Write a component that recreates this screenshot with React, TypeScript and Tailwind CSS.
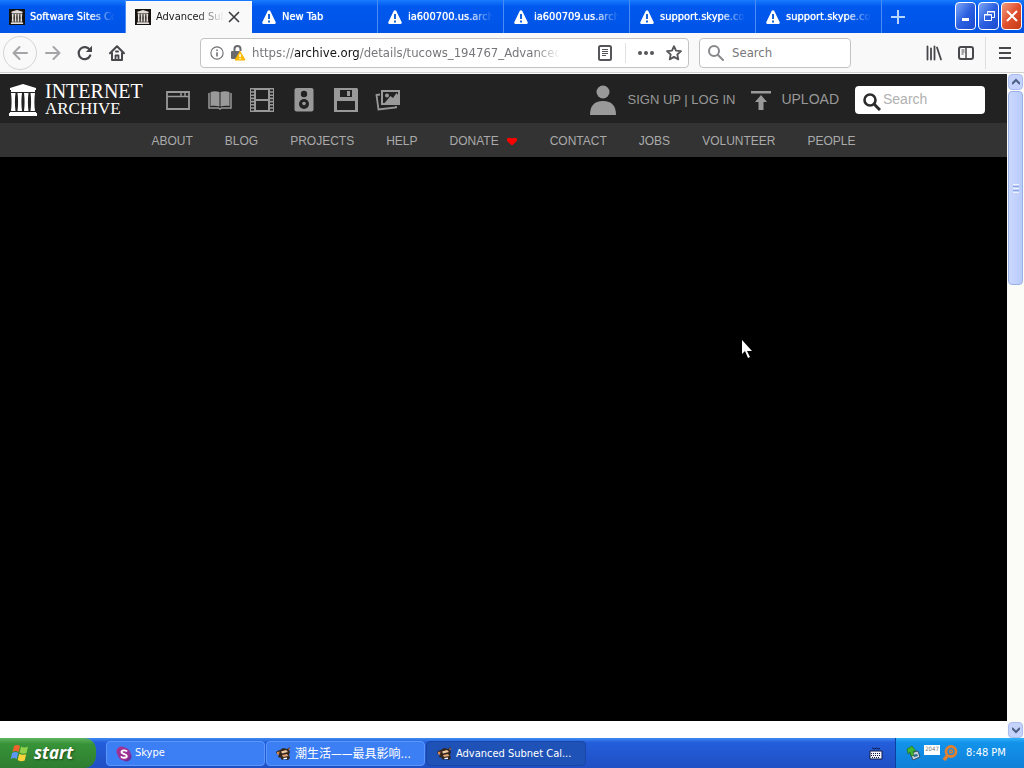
import React from "react";

const uiFont = "font-['DejaVu_Sans_Condensed','Noto_Sans_CJK_SC',sans-serif]";

function TempleIcon({ className, bars = "#fff" }: { className: string; bars?: string }) {
  return (
    <svg className={className} viewBox="0 0 28 32" fill={bars} aria-hidden="true">
      <path d="M14 0 27 4v2H1V4zM2 6h24v2H2zM1 28h26v1H1zM0 29h28v3H0z" />
      <path d="M2 9h4.500c-.8 6-.8 12 0 18H2c.8-6 .8-12 0-18zM8.500 9H13c-.8 6-.8 12 0 18H8.500c.8-6 .8-12 0-18zM15 9h4.500c-.8 6-.8 12 0 18H15c.8-6 .8-12 0-18zM21.500 9H26c-.8 6-.8 12 0 18h-4.500c.8-6 .8-12 0-18z" />
    </svg>
  );
}

function WarningIcon() {
  return (
    <svg className="size-4 shrink-0" viewBox="0 0 16 16" aria-hidden="true">
      <path d="M8 1.200c.6 0 1 .3 1.300.8l5.300 11c.5 1-.1 2-1.200 2H2.600c-1.100 0-1.700-1-1.200-2L6.700 2c.3-.5.7-.8 1.300-.8z" fill="#fff" />
      <path d="M7 5h2v5H7zM7 11.500h2v2H7z" fill="#1663d8" />
    </svg>
  );
}

function ArchiveFavicon() {
  return (
    <span className="flex size-4 shrink-0 items-center justify-center bg-[#15110f]">
      <TempleIcon className="h-[14px] w-[14px]" bars="#e4dcd6" />
    </span>
  );
}

const tabs = [
  { title: "Software Sites Collection", kind: "archive" },
  { title: "Advanced Subnet Calculator", kind: "archive", active: true },
  { title: "New Tab", kind: "warn" },
  { title: "ia600700.us.archive.org", kind: "warn" },
  { title: "ia600709.us.archive.org", kind: "warn" },
  { title: "support.skype.com", kind: "warn" },
  { title: "support.skype.com", kind: "warn" },
];

function TabStrip() {
  return (
    <div className="flex h-[33px] shrink-0 bg-linear-to-b from-[#1a7bff] via-[#0058ee] via-20% to-[#0054e6]">
      <div role="tablist" className="flex min-w-0">
        {tabs.map((t, i) =>
          t.active ? (
            <div key={i} className="mt-px flex w-[126px] min-w-0 items-center bg-[#f9f9fa] pr-3 pl-[9px] text-[#18181a]">
              <button role="tab" aria-selected="true" className="flex min-w-0 flex-1 items-center gap-[5px]">
                <ArchiveFavicon />
                <span className="flex-1 overflow-hidden whitespace-nowrap text-left [mask-image:linear-gradient(to_right,black_60%,transparent)]">{t.title}</span>
              </button>
              <button aria-label="Close tab" className="ml-1">
                <svg className="size-3" viewBox="0 0 12 12" fill="none" stroke="#3c3c40" strokeWidth="1.600">
                  <path d="M1 1l10 10M11 1L1 11" />
                </svg>
              </button>
            </div>
          ) : (
            <button
              key={i}
              role="tab"
              aria-selected="false"
              className="flex w-[126px] min-w-0 items-center gap-[5px] border-r border-[#4a8df6] pt-px pr-[10px] pl-[9px] text-white"
            >
              {t.kind === "archive" ? <ArchiveFavicon /> : <WarningIcon />}
              <span className="flex-1 overflow-hidden whitespace-nowrap text-left [text-shadow:0_0_1px_white] [mask-image:linear-gradient(to_right,black_70%,transparent)]">
                {t.title}
              </span>
            </button>
          ),
        )}
      </div>
      <button aria-label="New tab" className="flex w-8 items-center justify-center">
        <svg className="size-4" viewBox="0 0 16 16" stroke="#b5d5ff" strokeWidth="2">
          <path d="M8 1v14M1 8h14" />
        </svg>
      </button>
      <div className="ml-auto flex items-center gap-[2px] pr-[2px] pb-px">
        <button aria-label="Minimize" className="flex h-[28px] w-[21px] items-center justify-center rounded border border-white bg-linear-to-br from-[#7fa6f5] via-[#2b5fe0] to-[#1b4ad0]">
          <svg className="size-4" viewBox="0 0 16 16"><path d="M4 10h7v3H4z" fill="#fff" /></svg>
        </button>
        <button aria-label="Restore" className="flex h-[28px] w-[21px] items-center justify-center rounded border border-white bg-linear-to-br from-[#7fa6f5] via-[#2b5fe0] to-[#1b4ad0]">
          <svg className="size-4" viewBox="0 0 16 16" fill="none" stroke="#fff">
            <path d="M6.500 6V3.500h7v6H11M6 4h8M3.500 6.500h7v6h-7zM3 7h8" />
          </svg>
        </button>
        <button aria-label="Close" className="flex h-[28px] w-[21px] items-center justify-center rounded border border-white bg-linear-to-br from-[#f09a80] via-[#e0512c] to-[#c43a14]">
          <svg className="size-4" viewBox="0 0 16 16" stroke="#fff" strokeWidth="2"><path d="M3 3l10 10M13 3L3 13" /></svg>
        </button>
      </div>
    </div>
  );
}

function Toolbar() {
  return (
    <div className="flex h-10 shrink-0 items-center border-b border-[#d0d0d2] bg-[#f9f9fa] pt-px text-[13px]">
      <button aria-label="Back" className="ml-[3px] flex size-[34px] items-center justify-center rounded-full border border-[#d4d4d6]">
        <svg className="size-4" viewBox="0 0 16 16" fill="none" stroke="#a5a5a8" strokeWidth="2" strokeLinecap="round" strokeLinejoin="round">
          <path d="M15 8H1.500M7.500 2l-6 6 6 6" />
        </svg>
      </button>
      <button aria-label="Forward" className="ml-2 flex size-4 items-center justify-center">
        <svg className="size-4" viewBox="0 0 16 16" fill="none" stroke="#a5a5a8" strokeWidth="2" strokeLinecap="round" strokeLinejoin="round">
          <path d="M1 8h13.500M8.500 2l6 6-6 6" />
        </svg>
      </button>
      <button aria-label="Reload" className="ml-4">
        <svg className="size-4" viewBox="0 0 16 16" fill="none" stroke="#48484c" strokeWidth="2.200" strokeLinecap="round">
          <path d="M13.200 10.500a6 6 0 1 1-.4-5.500" />
          <path d="M15 .8V7H8.800z" fill="#48484c" stroke="none" />
        </svg>
      </button>
      <button aria-label="Home" className="ml-4">
        <svg className="size-4" viewBox="0 0 16 16" fill="none" stroke="#48484c" strokeWidth="2" strokeLinejoin="round" strokeLinecap="round">
          <path d="M1 8.200L8 1.200l7 7M3 8v7h10V8" />
          <path d="M6.500 15v-4.500h3V15" strokeWidth="1.800" />
          <path d="M7 6.500h2" strokeWidth="2" />
        </svg>
      </button>

      <div className="ml-[75px] flex h-[30px] min-w-0 flex-1 items-center rounded-sm border border-[#c3c3c5] bg-white pr-[6px] pl-[9px]">
        <svg className="size-[14px] shrink-0" viewBox="0 0 16 16" fill="none" stroke="#707074" strokeWidth="1.300" aria-hidden="true">
          <circle cx="8" cy="8" r="7" />
          <path d="M8 7v5M8 4v1.800" strokeWidth="1.800" />
        </svg>
        <svg className="ml-[6px] size-4 shrink-0" viewBox="0 0 16 16" aria-hidden="true">
          <path d="M4.500 6V4a3 3 0 0 1 6 0v2" fill="none" stroke="#6a6a6e" strokeWidth="2" />
          <rect x="1" y="6" width="9" height="8" rx="1" fill="#6a6a6e" />
          <path d="M10 6.500l5 8.500H5z" fill="#ffbf00" stroke="#f7b000" strokeLinejoin="round" />
          <path d="M9.300 9h1.500v3H9.300zM9.300 13h1.500v1.300H9.300z" fill="#fff" />
        </svg>
        <a href="https://archive.org/details/tucows_194767_Advanced_Subnet_Calculator" className="ml-[6px] max-w-[308px] flex-1 overflow-hidden whitespace-nowrap text-[#77777b] [mask-image:linear-gradient(to_right,black_92%,transparent)]">
          https://<span className="text-[#111]">archive.org</span>/details/tucows_194767_Advanced_Subnet_Calculator
        </a>
        <button aria-label="Reader view" className="ml-auto">
          <svg className="size-4" viewBox="0 0 16 16" fill="none" stroke="#56565a">
            <rect x="2" y="1" width="12" height="14" rx="1.500" strokeWidth="2" />
            <path d="M5 4.500h6M5 6.500h6M5 8.500h6M5 10.500h4" />
          </svg>
        </button>
        <span className="ml-3 h-5 w-px bg-[#e2e2e4]" />
        <button aria-label="Page actions" className="ml-3">
          <svg className="size-4" viewBox="0 0 16 16" fill="#56565a">
            <circle cx="2" cy="8" r="2" /><circle cx="8" cy="8" r="2" /><circle cx="14" cy="8" r="2" />
          </svg>
        </button>
        <button aria-label="Bookmark" className="ml-3">
          <svg className="size-4" viewBox="0 0 16 16" fill="none" stroke="#56565a" strokeWidth="1.800" strokeLinejoin="round">
            <path d="M8 1.200l2 4.500 5 .5-3.700 3.300 1 4.900L8 11.900l-4.300 2.500 1-4.900L1 6.200l5-.5z" />
          </svg>
        </button>
      </div>

      <label className="ml-[10px] flex h-[30px] w-[152px] items-center gap-2 rounded-sm border border-[#c3c3c5] bg-white px-2">
        <svg className="size-4 shrink-0" viewBox="0 0 16 16" fill="none" stroke="#88888c" strokeWidth="2" strokeLinecap="round" aria-hidden="true">
          <circle cx="6" cy="6" r="5" /><path d="M10 10l5 5" />
        </svg>
        <input type="text" aria-label="Browser search" placeholder="Search" className="w-full min-w-0 outline-none placeholder:text-[#77777b]" />
      </label>

      <button aria-label="Library" className="ml-[75px]">
        <svg className="size-4" viewBox="0 0 16 16" fill="none" stroke="#48484c" strokeWidth="1.800" strokeLinecap="round">
          <path d="M1.500 1.500v13M5 3.500v11M8.500 1.500v13M11 2.500l4 12" />
        </svg>
      </button>
      <button aria-label="Sidebars" className="ml-4">
        <svg className="size-4" viewBox="0 0 16 16" fill="none" stroke="#48484c">
          <rect x="1" y="2" width="14" height="12" rx="2" strokeWidth="2" />
          <path d="M8 2v12" strokeWidth="1.500" /><path d="M3.500 5h3M3.500 7h3M3.500 9h2" />
        </svg>
      </button>
      <span className="ml-[11px] h-8 w-px bg-[#dfdfe1]" />
      <button aria-label="Menu" className="mr-[11px] ml-[11px]">
        <svg className="size-4" viewBox="0 0 16 16" fill="none" stroke="#48484c" strokeWidth="2">
          <path d="M2 3h12M2 8h12M2 13h12" />
        </svg>
      </button>
    </div>
  );
}

const mediaIcons = [
  {
    name: "Web",
    art: (
      <>
        <path d="M2 4h22v17H2z" fill="none" stroke="#999" strokeWidth="1.800" />
        <path d="M2 8.500h22M16 4v4M20 4v4" stroke="#999" strokeWidth="1.500" />
      </>
    ),
  },
  {
    name: "Texts",
    art: (
      <>
        <path d="M3.500 4c3-1 6-1 9 0v14.500c-3-1-6-1-9-.500zM13.500 4c3-1 6-1 9 0v14c-3-.5-6-.5-9 .5z" fill="#999" />
        <path d="M2 5v15h9.500l1.500 1 1.500-1H24V5" fill="none" stroke="#999" strokeWidth="1.500" />
      </>
    ),
  },
  {
    name: "Video",
    art: (
      <>
        <path d="M6 1h14v22H6zM6 12h14" fill="none" stroke="#999" strokeWidth="2" />
        <path d="M3.500 0v24M22.500 0v24" stroke="#999" strokeWidth="3" strokeDasharray="1.600 1.600" />
        <path d="M1.500 0v24M24.500 0v24" stroke="#999" />
      </>
    ),
  },
  {
    name: "Audio",
    art: (
      <>
        <rect x="3.500" y="0" width="19" height="23.500" rx="2" fill="#999" />
        <circle cx="13" cy="6" r="3.200" fill="#222" />
        <circle cx="13" cy="16" r="5" fill="#222" />
        <circle cx="13" cy="15.500" r="1.800" fill="#999" />
      </>
    ),
  },
  {
    name: "Software",
    art: (
      <>
        <path d="M1 0h23l1 1v23H1z" fill="#999" />
        <path d="M7 2h12v7H7zM4 13h18v9H4z" fill="#222" />
        <path d="M14 3h3v5h-3z" fill="#999" />
      </>
    ),
  },
  {
    name: "Images",
    art: (
      <>
        <path d="M5 6.500L1.500 7l2 14.500 17.500-2V18" fill="none" stroke="#999" strokeWidth="1.800" />
        <path d="M6 2h19v15H6z" fill="#999" />
        <path d="M8 4h15v3l-1.500-2-3.500 5-2.500-2-6 7H8z" fill="#222" />
        <circle cx="12" cy="7.500" r="2" fill="#999" />
      </>
    ),
  },
];

const siteLinks = ["ABOUT", "BLOG", "PROJECTS", "HELP", "DONATE", "CONTACT", "JOBS", "VOLUNTEER", "PEOPLE"];

function ArchivePage() {
  return (
    <div className="flex min-w-0 flex-1 flex-col bg-white font-['Liberation_Sans',sans-serif]">
      <header className="mt-px flex h-[49px] shrink-0 items-center bg-[#222] pt-[2px] pr-[22px] pl-[9px] text-[14px] text-[#999]">
        <a href="#home" className="flex items-center gap-2 text-white">
          <TempleIcon className="h-8 w-7" />
          <span className="flex w-[98px] flex-col font-['Liberation_Serif',serif]">
            <span className="text-[20px] leading-[18px]">INTERNET</span>
            <span className="text-[17px] leading-[18px]">ARCHIVE</span>
          </span>
        </a>
        <nav aria-label="Media types" className="ml-[22px] flex gap-4">
          {mediaIcons.map((m) => (
            <a key={m.name} href={"#" + m.name} aria-label={m.name}>
              <svg className="h-6 w-[26px]" viewBox="0 0 26 24">{m.art}</svg>
            </a>
          ))}
        </nav>
        <div className="ml-auto flex items-center">
          <svg className="h-[30px] w-[26px]" viewBox="0 0 26 30" fill="#999" aria-hidden="true">
            <circle cx="13" cy="7" r="6.500" />
            <path d="M0 30c0-9 4-14 13-14s13 5 13 14z" />
          </svg>
          <a href="#login" className="ml-3 text-[13px] whitespace-nowrap">SIGN UP | LOG IN</a>
          <a href="#upload" className="ml-4 flex items-center gap-[10px]">
            <svg className="h-5 w-5" viewBox="0 0 20 20" fill="#999" aria-hidden="true">
              <path d="M0 1h20v2.500H0zM10 5l6 7h-3.500v8h-5v-8H4z" />
            </svg>
            UPLOAD
          </a>
          <label className="ml-4 flex h-7 w-[130px] items-center gap-[2px] rounded bg-white pl-2">
            <svg className="mt-1 size-[18px] shrink-0" viewBox="0 0 18 18" fill="none" stroke="#2c2c2c" aria-hidden="true">
              <circle cx="7" cy="7" r="5.500" strokeWidth="2.600" />
              <path d="M11 11l6 6" strokeWidth="3" />
            </svg>
            <input type="search" aria-label="Search the archive" placeholder="Search" className="w-full min-w-0 outline-none placeholder:text-[#b0b0b0]" />
          </label>
        </div>
      </header>
      <nav aria-label="Site" className="flex h-[34px] shrink-0 items-center justify-center gap-8 bg-[#333] pt-[2px] text-[12px] text-[#aaa]">
        {siteLinks.map((l) => (
          <a key={l} href={"#" + l.toLowerCase()} className="flex items-center gap-[7px]">
            {l}
            {l === "DONATE" && (
              <svg className="h-3 w-3" viewBox="0 0 12 12" aria-hidden="true">
                <path d="M6 10.500L1.200 6C-.2 3.500 3.200 1.500 6 3.500 8.800 1.500 12.200 3.500 10.800 6z" fill="#f00" />
              </svg>
            )}
          </a>
        ))}
      </nav>
      <main className="flex-1 bg-black" />
      <div className="h-[17px] shrink-0 bg-white" />
    </div>
  );
}

function ScrollBar() {
  return (
    <div className="flex w-[17px] shrink-0 flex-col bg-[#fbfbf8] px-px pt-px">
      <button aria-label="Scroll up" className="flex h-4 shrink-0 items-center justify-center rounded-sm border border-[#a9bdf0] bg-[#c5d3fc]">
        <svg className="size-2" viewBox="0 0 8 8" fill="none" stroke="#4d6185" strokeWidth="2"><path d="M0 6l4-4 4 4" /></svg>
      </button>
      <div className="mt-px flex h-[194px] shrink-0 flex-col items-center justify-center gap-px rounded-sm border border-[#98b0e8] bg-linear-to-r from-[#cbd8ff] to-[#b9cbfa]">
        <span className="h-px w-[6px] bg-[#edf2ff]" />
        <span className="h-px w-[6px] bg-[#8ca6e4]" />
        <span className="h-px w-[6px] bg-[#edf2ff]" />
        <span className="h-px w-[6px] bg-[#8ca6e4]" />
        <span className="h-px w-[6px] bg-[#edf2ff]" />
      </div>
      <button aria-label="Scroll down" className="mt-auto flex h-4 shrink-0 items-center justify-center rounded-sm border border-[#a9bdf0] bg-[#c5d3fc]">
        <svg className="size-2" viewBox="0 0 8 8" fill="none" stroke="#4d6185" strokeWidth="2"><path d="M0 2l4 4 4-4" /></svg>
      </button>
    </div>
  );
}

function BugIcon() {
  return (
    <svg className="size-4 shrink-0" viewBox="0 0 16 16" aria-hidden="true">
      <path d="M1 5l3-1 3-2 4 1 3-2-1 3 1 2-1 3 1 3-2 2-4-1-2 1-2-3-1 1-1-2 1-1-3-2z" fill="#33241c" />
      <path d="M1 6l2.500-.5L3 9l-2-1z" fill="#d9874c" />
      <path d="M5 5.500l5-1.500 2 2-6 1.500z" fill="#f0c9a0" />
      <path d="M6 9l5-1 1.500 2L7 11z" fill="#dca577" />
      <path d="M7 12l4-.5V13H8z" fill="#fff" />
      <path d="M12 3l2-1-1 2z" fill="#f08a38" />
    </svg>
  );
}

function Taskbar() {
  return (
    <footer className="flex h-[30px] shrink-0 bg-linear-to-b from-[#3f8af3] via-[#245edb] via-15% to-[#1f4fc4] text-white">
      <button className="flex w-24 items-center gap-1 rounded-r-xl bg-linear-to-b from-[#5fb35f] via-[#379338] via-20% to-[#2f7d30] pl-[10px] font-['Open_Sans',sans-serif] text-[17px] leading-5 font-bold italic [text-shadow:1px_1px_2px_#1a4a1a]">
        <svg className="size-5 shrink-0" viewBox="0 0 20 20" aria-hidden="true">
          <path d="M4 3c2-1.500 4-1.500 6 0L8.500 9C6.500 7.700 4.500 7.700 2.500 9z" fill="#f0622d" />
          <path d="M11 3.500c2 1.300 4.500 1.300 7 0L16.500 10c-2.500 1.200-4.500 1-7-.5z" fill="#8fd24a" />
          <path d="M2.200 10c2-1.300 4-1.300 6 0l-1.500 6c-2-1.300-4-1.300-6 0z" fill="#5c97f5" />
          <path d="M9.200 10.800c2.300 1.300 4.500 1.400 7 .2l-1.500 6.500c-2.500 1.200-4.700 1-7-.5z" fill="#fbd23c" />
        </svg>
        start
      </button>
      <div className="ml-[10px] flex min-w-0 items-center gap-px pt-px">
        <button className="flex h-[25px] w-[159px] items-center gap-[3px] rounded-sm border border-[#5b97fb] bg-[#3c7ef3] pl-[9px]">
          <svg className="size-4 shrink-0" viewBox="0 0 16 16" aria-hidden="true">
            <circle cx="5.500" cy="5.500" r="5" fill="#a8328f" /><circle cx="10.500" cy="10.500" r="5" fill="#6c2c96" /><circle cx="8" cy="8" r="6.500" fill="#9b3197" />
            <path d="M11 5.500C10 3.800 5.500 3.800 5.500 6.100c0 2.400 5.300 1.500 5.300 3.900 0 2.300-4.800 2.300-5.800.3" fill="none" stroke="#fff" strokeWidth="1.800" />
          </svg>
          Skype
        </button>
        <button className="flex h-[25px] w-[159px] items-center gap-[3px] rounded-sm border border-[#5b97fb] bg-[#3c7ef3] pl-[9px]">
          <BugIcon />
          <span className="whitespace-nowrap text-[12px]">潮生活——最具影响...</span>
        </button>
        <button className="flex h-[25px] w-[160px] items-center gap-[3px] rounded-sm border border-[#1a45a8] bg-[#1e52b7] pt-px pl-[10px]">
          <BugIcon />
          <span className="whitespace-nowrap">Advanced Subnet Cal...</span>
        </button>
      </div>
      <button aria-label="Keyboard layout" className="mr-3 ml-auto">
        <svg className="h-4 w-[14px]" viewBox="0 0 14 16" aria-hidden="true">
          <path d="M3 3h1l1 1h1l1-1h1l1 1h1l1-1" fill="none" stroke="#111a44" />
          <path d="M1 6h12v8H1z" fill="#f2f4ff" stroke="#101840" />
          <path d="M2 8.500h10M2 10.500h10M3 12.500h8" stroke="#101840" strokeDasharray="1 1" />
        </svg>
      </button>
      <div className="flex w-[129px] items-center border-l border-[#0b3fa0] bg-linear-to-b from-[#2fb2f5] via-[#1393eb] via-15% to-[#1080d8] pl-[10px]">
        <svg className="size-4" viewBox="0 0 16 16" aria-hidden="true">
          <path d="M4 8l8-2 2 6-7 3z" fill="#c7d3d8" stroke="#35506a" />
          <path d="M7 10l4-1 1 2-4 1z" fill="#24649a" />
          <path d="M1 4l5-3 4 5-3 .5 1 4-3 .5-1-4-2 2z" fill="#43b531" stroke="#1c6420" strokeWidth=".6" />
        </svg>
        <span className="mb-[6px] ml-[2px] h-[10px] w-4 bg-white text-center text-[6px] leading-[8px] text-[#777]">2047</span>
        <svg className="ml-[2px] size-4" viewBox="0 0 16 16" fill="none" stroke="#e08030" aria-hidden="true">
          <circle cx="9" cy="6.500" r="5" strokeWidth="2.800" /><circle cx="9" cy="6.500" r="1.500" strokeWidth="1.500" />
          <path d="M5.500 10.500L2 15" strokeWidth="3.500" />
        </svg>
        <time className="ml-2 whitespace-nowrap">8:48 PM</time>
      </div>
    </footer>
  );
}

export default function App() {
  return (
    <div className={"relative flex h-screen flex-col overflow-hidden text-[11px] " + uiFont}>
      <TabStrip />
      <Toolbar />
      <div className="flex min-h-0 flex-1">
        <ArchivePage />
        <ScrollBar />
      </div>
      <Taskbar />
      <svg className="pointer-events-none absolute top-[339px] left-[741px] h-5 w-3" viewBox="0 0 12 20" aria-hidden="true">
        <path d="M1 1v14l3-3 3 7 2-1-3-6h5z" fill="#fff" />
      </svg>
    </div>
  );
}
